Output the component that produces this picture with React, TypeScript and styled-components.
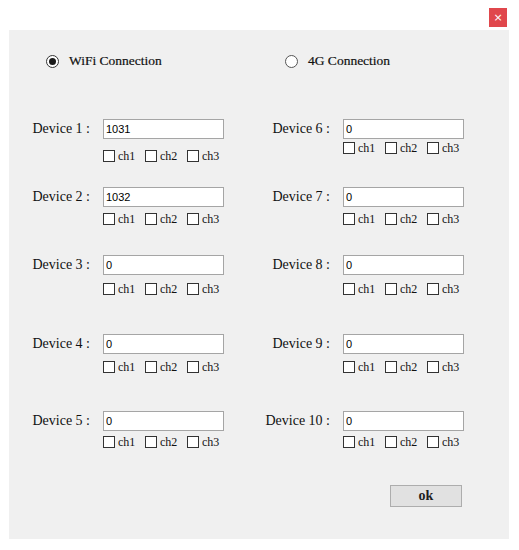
import React from "react";
import styled, { createGlobalStyle } from "styled-components";

const Global = createGlobalStyle`
  html, body { margin: 0; padding: 0; background: #ffffff; }
  body { width: 519px; height: 550px; overflow: hidden; }
`;

const serif = `"Liberation Serif", "Times New Roman", serif`;

const Window = styled.div`
  width: 519px;
  height: 550px;
  display: flex;
  flex-direction: column;
  background: #ffffff;
`;

const TitleBar = styled.div`
  height: 30px;
  display: flex;
  justify-content: flex-end;
  align-items: flex-start;
  padding: 8px 12px 0 0;
  box-sizing: border-box;
`;

const CloseButton = styled.button`
  width: 18px;
  height: 19px;
  border: none;
  padding: 0;
  background: #e0474c;
  color: #ffffff;
  font-family: "DejaVu Sans", sans-serif;
  font-size: 11px;
  line-height: 19px;
  text-align: center;
`;

const Panel = styled.div`
  margin: 0 10px 0 9px;
  height: 509px;
  background: #f0f0f0;
  display: flex;
  flex-direction: column;
  font-family: ${serif};
  color: #111111;
`;

const RadioRow = styled.div`
  margin-top: 23px;
  height: 16px;
  padding-left: 37px;
  display: grid;
  grid-template-columns: 239px 239px;
  align-items: center;
`;

const RadioOption = styled.label`
  display: flex;
  align-items: center;
  gap: 10px;
  font-family: ${serif};
  font-size: 13.5px;
  line-height: 16px;
  color: #111111;
  -webkit-text-stroke: 0.2px #111111;
`;

const RadioCircle = styled.span<{ $checked: boolean }>`
  width: 13px;
  height: 13px;
  box-sizing: border-box;
  border-radius: 50%;
  border: 1px solid ${(p) => (p.$checked ? "#333333" : "#555555")};
  background: #ffffff;
  display: flex;
  align-items: center;
  justify-content: center;
  &::after {
    content: "";
    width: 7px;
    height: 7px;
    border-radius: 50%;
    background: ${(p) => (p.$checked ? "#1a1a1a" : "transparent")};
  }
`;

const DeviceRow = styled.div<{ $top: number; $height: number }>`
  margin-top: ${(p) => p.$top}px;
  height: ${(p) => p.$height}px;
  padding-left: 15px;
  display: grid;
  grid-template-columns: 240px 240px;
  align-items: start;
`;

const DeviceCell = styled.div`
  display: grid;
  grid-template-columns: 66px 121px;
  column-gap: 13px;
  align-items: center;
`;

const DeviceLabel = styled.span`
  text-align: right;
  font-family: ${serif};
  font-size: 14px;
  line-height: 20px;
  white-space: nowrap;
`;

const DeviceInput = styled.input`
  width: 121px;
  height: 20px;
  box-sizing: border-box;
  border: 1px solid #a5a5a5;
  background: #ffffff;
  padding: 0 2px;
  font-family: "Liberation Sans", Arial, sans-serif;
  font-size: 11px;
  color: #000;
  outline: none;
`;

const ChannelRow = styled.div<{ $gap: number }>`
  grid-column: 2;
  margin-top: ${(p) => p.$gap}px;
  display: grid;
  grid-template-columns: 42px 42px 42px;
`;

const Channel = styled.label`
  display: flex;
  align-items: center;
  gap: 3px;
  font-family: ${serif};
  font-size: 12px;
  line-height: 12px;
  color: #111111;
`;

const CheckBox = styled.span`
  width: 12px;
  height: 12px;
  box-sizing: border-box;
  border: 1px solid #333333;
  background: #ffffff;
  flex: none;
`;

const Footer = styled.div`
  display: flex;
  justify-content: flex-end;
  padding-right: 47px;
`;

const OkButton = styled.button`
  width: 72px;
  height: 22px;
  box-sizing: border-box;
  border: 1px solid #adadad;
  background: #e1e1e1;
  font-family: ${serif};
  font-size: 14px;
  font-weight: bold;
  color: #1e1e1e;
  padding: 0;
`;

type Dev = { n: number; value: string; gap: number };

const rows: { top: number; height: number; left: Dev; right: Dev }[] = [
  { top: 50, height: 68, left: { n: 1, value: "1031", gap: 11 }, right: { n: 6, value: "0", gap: 3 } },
  { top: 0, height: 68, left: { n: 2, value: "1032", gap: 6 }, right: { n: 7, value: "0", gap: 6 } },
  { top: 0, height: 79, left: { n: 3, value: "0", gap: 8 }, right: { n: 8, value: "0", gap: 8 } },
  { top: 0, height: 77, left: { n: 4, value: "0", gap: 7 }, right: { n: 9, value: "0", gap: 7 } },
  { top: 0, height: 74, left: { n: 5, value: "0", gap: 5 }, right: { n: 10, value: "0", gap: 5 } },
];

function Device({ d }: { d: Dev }) {
  return (
    <DeviceCell>
      <DeviceLabel>Device {d.n} :</DeviceLabel>
      <DeviceInput defaultValue={d.value} />
      <ChannelRow $gap={d.gap}>
        {["ch1", "ch2", "ch3"].map((c) => (
          <Channel key={c}>
            <CheckBox />
            {c}
          </Channel>
        ))}
      </ChannelRow>
    </DeviceCell>
  );
}

export default function App() {
  return (
    <Window>
      <Global />
      <TitleBar>
        <CloseButton>×</CloseButton>
      </TitleBar>
      <Panel>
        <RadioRow>
          <RadioOption>
            <RadioCircle $checked={true} />
            WiFi Connection
          </RadioOption>
          <RadioOption>
            <RadioCircle $checked={false} />
            4G Connection
          </RadioOption>
        </RadioRow>
        {rows.map((r, i) => (
          <DeviceRow key={i} $top={r.top} $height={r.height}>
            <Device d={r.left} />
            <Device d={r.right} />
          </DeviceRow>
        ))}
        <Footer>
          <OkButton>ok</OkButton>
        </Footer>
      </Panel>
    </Window>
  );
}
